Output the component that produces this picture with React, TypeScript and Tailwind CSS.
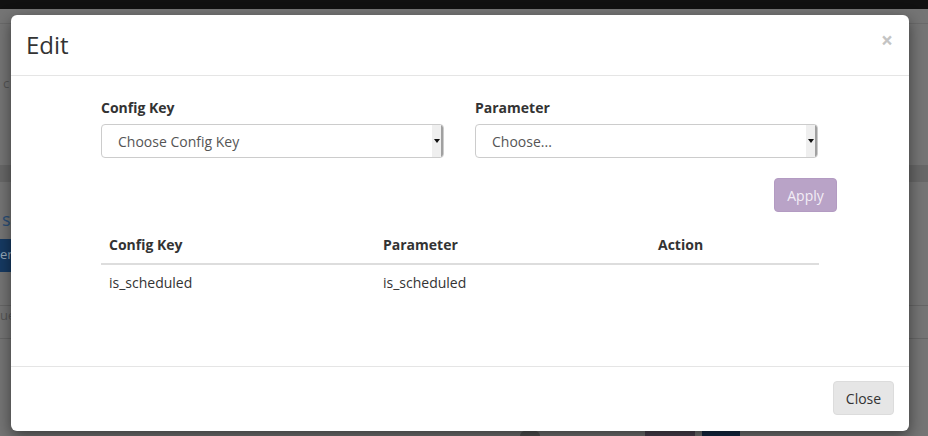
import React from "react";

function FakeSelect({ text }: { text: string }) {
  return (
    <div className="flex h-[34px] w-full items-stretch overflow-hidden rounded-[4px] border border-[#cccccc] bg-white">
      <div className="flex flex-1 items-center pl-[16px] text-[14px] text-[#555555]">{text}</div>
      <div className="flex w-[11px] items-center justify-center border-r-2 border-[#a0a0a0] bg-[#efefef]">
        <svg width="6" height="4" viewBox="0 0 6 4">
          <path d="M0 0 L6 0 L3 4 Z" fill="#111" />
        </svg>
      </div>
    </div>
  );
}

export default function App() {
  return (
    <div
      className="relative h-[436px] w-[928px] overflow-hidden bg-[#757575]"
      style={{ fontFamily: '"Open Sans", "Noto Sans", sans-serif' }}
    >
      {/* background page (behind backdrop) */}
      <div className="flex h-full flex-col">
        <div className="h-[9px] bg-[#111111]" />
        <div className="h-[14px]" />
        <div className="h-[1px] bg-[#6a6a6a]" />
        <div className="h-[51px]" />
        <div className="pl-[3px] text-[13px] leading-[16px] text-[#555]">c</div>
        <div className="h-[74px]" />
        <div className="h-[17px] bg-[#686868]" />
        <div className="h-[26px]" />
        <div className="flex items-center gap-1 pl-[2px] text-[18px] leading-[22px] text-[#2a4f7a]">
          <span>s</span>
          <span className="h-[20px] w-[2px] bg-[#7a5a20]" />
        </div>
        <div className="h-[9px]" />
        <div className="h-[33px] w-[30px] bg-[#163a63] pt-[6px] text-[13px] text-[#9ab]">er</div>
        <div className="h-[34px] border-b border-[#666]" />
        <div className="h-[18px] text-[13px] text-[#555]">ue</div>
        <div className="h-[15px] border-b border-[#666]" />
        <div className="flex-1" />
        <div className="flex h-[5px] items-end gap-0">
          <div className="ml-[520px] h-[5px] w-[20px] rounded-t-full bg-[#555]" />
          <div className="ml-[105px] h-[5px] w-[50px] bg-[#4d4250]" />
          <div className="ml-[7px] h-[5px] w-[38px] bg-[#162a45]" />
        </div>
      </div>

      {/* modal */}
      <div className="absolute left-[11px] top-[15px] flex h-[416px] w-[898px] flex-col rounded-[6px] bg-white text-[#333333] shadow-[0_5px_15px_rgba(0,0,0,0.5)]">
        {/* header */}
        <div className="flex h-[61px] items-center justify-between border-b border-[#e5e5e5] pl-[15px] pr-[16px]">
          <h4 className="text-[24px] leading-[30px] text-[#333] mt-[0px]">Edit</h4>
          <span className="mt-[-10px] text-[21px] font-bold leading-none text-[#c4c4c4]">×</span>
        </div>

        {/* body */}
        <div className="flex flex-1 justify-center pt-[22px]">
          <div className="w-[718px]">
            <div className="flex gap-[31px]">
              <div className="flex w-[343px] flex-col">
                <label className="mb-[6px] text-[14px] font-bold leading-[20px]">Config Key</label>
                <FakeSelect text="Choose Config Key" />
              </div>
              <div className="flex w-[343px] flex-col">
                <label className="mb-[6px] text-[14px] font-bold leading-[20px]">Parameter</label>
                <FakeSelect text="Choose..." />
              </div>
            </div>
            <div className="mt-[20px] flex justify-end">
              <button className="mr-[-18px] h-[34px] w-[63px] rounded-[4px] border border-[#b39bc2] bg-[#b9a3c7] text-[14px] text-[#f3eef6]">
                Apply
              </button>
            </div>
            <table className="mt-[15px] w-[718px] border-collapse text-left text-[14px]">
              <thead>
                <tr className="border-b-2 border-[#dddddd]">
                  <th className="w-[274px] px-[8px] py-[8px] font-bold leading-[20px]">Config Key</th>
                  <th className="w-[275px] px-[8px] py-[8px] font-bold leading-[20px]">Parameter</th>
                  <th className="px-[8px] py-[8px] font-bold leading-[20px]">Action</th>
                </tr>
              </thead>
              <tbody>
                <tr>
                  <td className="px-[8px] py-[8px] leading-[20px]">is_scheduled</td>
                  <td className="px-[8px] py-[8px] leading-[20px]">is_scheduled</td>
                  <td className="px-[8px] py-[8px] leading-[20px]"></td>
                </tr>
              </tbody>
            </table>
          </div>
        </div>

        {/* footer */}
        <div className="flex h-[65px] items-center justify-end border-t border-[#e5e5e5] pr-[15px]">
          <button className="mt-[-2px] h-[34px] w-[61px] rounded-[4px] border border-[#dcdcdc] bg-[#e6e6e6] text-[14px] text-[#333]">
            Close
          </button>
        </div>
      </div>
    </div>
  );
}
